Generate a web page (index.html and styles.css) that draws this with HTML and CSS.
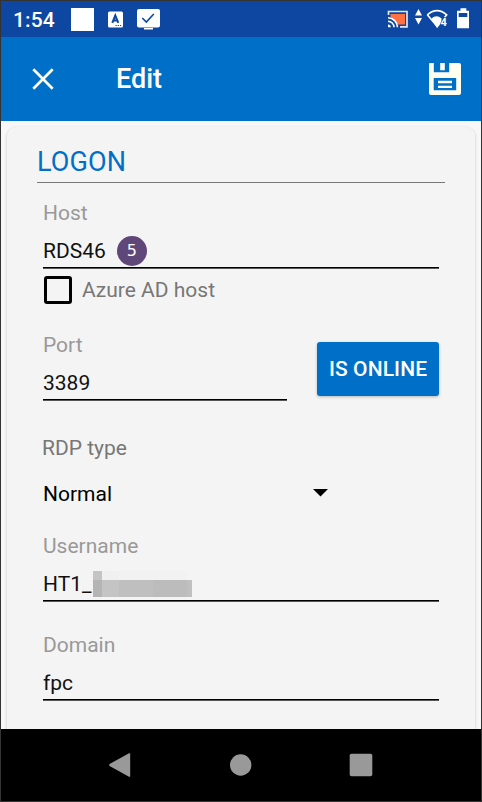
FILE: index.html
```html
<!DOCTYPE html>
<html lang="en">
<head>
<meta charset="utf-8">
<title>Edit</title>
<link rel="stylesheet" href="styles.css">
</head>
<body>
<div class="phone">
  <div class="status">
    <span class="clock">1:54</span>
    <svg class="notices" width="92" height="36" viewBox="70 1 92 36">
      <path fill="#fff" d="M71 8h23v23H71z"/>
      <rect x="108" y="11.500" width="15" height="16" rx="1.500" fill="#fff"/>
      <path d="M112.300 22.800 115.300 15.500 118.300 22.800M113.400 20.400H117.200" fill="none" stroke="#0d47a1" stroke-width="2"/>
      <path d="M115.500 25.500H122" stroke="#0d47a1" stroke-width="1.200" stroke-dasharray="1.200 1"/>
      <rect x="137" y="9" width="23" height="18.500" rx="2" fill="#fff"/>
      <path d="M144 28h9v1.500h-9z" fill="#fff"/>
      <path d="m142.300 18 4 4 7.500-8" fill="none" stroke="#0d47a1" stroke-width="1.600"/>
    </svg>
    <svg class="signals" width="86" height="36" viewBox="386 1 86 36">
      <path d="M390.500 14h14.500v10.500h-7.500l-1.500-3.500-5.500-4z" fill="#ff7043"/>
      <path d="M388.500 15v-3.500h18.500v15.300h-7" fill="none" stroke="#e3e6ef" stroke-width="1.700"/>
      <path d="M388 17.800a9.500 9.500 0 0 1 9.500 9.500M388 21.200a6 6 0 0 1 6 6" fill="none" stroke="#fff" stroke-width="1.600"/>
      <path d="M388 24.500a2.800 2.800 0 0 1 2.800 2.800H388zM415 15.500l3.500-6.500 3.500 6.500zM415 18l3.500 6.500 3.500-6.500z" fill="#fff"/>
      <path d="M427.300 14.800q9.700-8.200 19.400 0L444.500 17.500M427.300 14.800l9.500 11.200" fill="none" stroke="#fff" stroke-width="1.600"/>
      <path d="M431.500 18.500q5-4.500 10 0v4l-4.500 5.800z" fill="#fff"/>
      <text x="440.500" y="25.500" class="wifi-number">4</text>
      <path d="M460.500 8.300h5.800v2.500h2.700v17.500h-12V10.800h3.500z" fill="#fff"/>
      <path d="M458.700 13h8.600v4h-8.600z" fill="#0d47a1"/>
    </svg>
  </div>
  <header class="toolbar">
    <svg class="close" width="22" height="22" viewBox="0 0 22 22"><path d="m1.300 1.300 19.400 19.400M20.700 1.300 1.300 20.700" stroke="#fffff0" stroke-width="2.700"/></svg>
    <h1>Edit</h1>
    <svg class="save" width="32" height="32" viewBox="0 0 32 32">
      <path fill="#fffff0" fill-rule="evenodd" d="M1 0h3.800v9.200h15.400V0H30q2 0 2 2v28q0 2-2 2H2q-2 0-2-2V1q0-1 1-1zM4.700 15v12.300h22.500V15z"/>
      <path fill="#fffff0" d="M11.200 0h4.600v7.200h-4.600zM9 17.800h14v2.400H9zM9 22.700h14V25H9z"/>
    </svg>
  </header>
  <main class="content">
    <section class="card">
      <h2>LOGON</h2>
      <div class="form">
        <div class="field">
          <label>Host</label>
          <div class="value">RDS46<span class="step">5</span></div>
        </div>
        <div class="check"><span class="box"></span>Azure AD host</div>
        <div class="port-row">
          <div class="field port">
            <label>Port</label>
            <div class="value">3389</div>
          </div>
          <button class="online">IS ONLINE</button>
        </div>
        <div class="type-label">RDP type</div>
        <div class="select">Normal<svg class="caret" width="15" height="8" viewBox="0 0 15 8"><path d="M0 0h15L7.500 7.500z"/></svg></div>
        <div class="field user">
          <label>Username</label>
          <div class="value">HT1_<svg class="mask" width="99" height="26" viewBox="0 0 99 26" shape-rendering="crispEdges">
            <path fill="#c4c4c4" d="M0 0h9v9H0z"/><path fill="#f0f0f0" d="M9 0h17v9H9z"/><path fill="#f2f2f2" d="M26 0h68v9H26z"/>
            <path fill="#b4b4b4" d="M0 9h9v17H0z"/><path fill="#c4c4c4" d="M9 9h17v17H9z"/><path fill="#bfbfbf" d="M26 9h34v17H26z"/><path fill="#bcbcbc" d="M60 9h34v17H60z"/><path fill="#c0c0c0" d="M94 9h5v17h-5z"/>
          </svg></div>
        </div>
        <div class="field domain">
          <label>Domain</label>
          <div class="value">fpc</div>
        </div>
      </div>
    </section>
  </main>
  <nav class="navbar">
    <svg width="22" height="24" viewBox="0 0 22 24"><path d="M.6 11 20 .3q1.200-.5 1.200.7v22q0 1.200-1.200.7L.6 13q-1-1 0-2z" fill="#999"/></svg>
    <svg width="22" height="22" viewBox="0 0 22 22"><circle cx="11" cy="11" r="10.700" fill="#999"/></svg>
    <svg width="24" height="24" viewBox="0 0 24 24"><rect x=".7" y=".7" width="22.600" height="22.600" rx="1.800" fill="#999"/></svg>
  </nav>
</div>
</body>
</html>
```
FILE: styles.css
```css
* { box-sizing: border-box; }
body { margin: 0; font-family: Roboto, "Liberation Sans", sans-serif; font-size: 21px; line-height: 24px; color: #111; }
h1, h2 { margin: 0; }
svg { display: block; flex: none; }

.phone { display: flex; flex-direction: column; width: 482px; height: 802px; border: 1px solid #333; background: #f4f4f4; overflow: hidden; }

.status { display: flex; height: 36px; background: #0d47a1; color: #fff; }
.clock { width: 69px; padding: 7px 0 0 12px; font-weight: 500; letter-spacing: 0.1px; }
.signals { margin-left: auto; margin-right: 9px; }
.wifi-number { font: 700 11px Roboto, sans-serif; fill: #fff; stroke: #0d47a1; stroke-width: 1px; paint-order: stroke; }

.toolbar { display: flex; align-items: center; height: 84px; padding: 0 20px 0 31px; background: #006fc8; color: #fff; }
.toolbar h1 { margin-left: 62px; font-size: 27px; line-height: 32px; font-weight: 500; }
.save { margin-left: auto; }

.content { flex: 1; min-height: 0; padding: 6px 6px 0; overflow: hidden; background: #f7f7f7; }
.card { height: 640px; padding: 20px 30px 0; border-radius: 9px; background: #f4f4f4; box-shadow: 0 1px 3px rgba(0, 0, 0, 0.22); }
.card h2 { height: 36px; border-bottom: 1px solid #777; color: #006fc8; font-size: 27px; line-height: 30px; font-weight: 400; letter-spacing: 0.15px; }
.form { padding: 18px 6px 0; }

.field { height: 68px; border-bottom: 1px solid #555; box-shadow: inset 0 -1px #000; }
.field label { display: block; color: #999; }
.value { display: flex; align-items: center; height: 24px; margin-top: 14px; color: #111; }
.step { width: 30px; height: 30px; margin-left: 11px; border-radius: 50%; background: #5f4879; color: #fff; font: 16px/29px "DejaVu Sans", sans-serif; text-align: center; }
.mask { margin-left: 1px; }

.check { display: flex; align-items: center; gap: 10px; height: 24px; margin-top: 9px; padding-left: 1px; color: #777; }
.box { width: 28px; height: 28px; border: 3px solid #000; border-radius: 3px; }

.port-row { display: flex; justify-content: space-between; margin-top: 31px; }
.port { width: 244px; }
.online { width: 122px; height: 54px; margin-top: 9px; padding: 1px 0 0; border: 0; border-radius: 3px; background: #006fc8; color: #fff; font: 500 21px/53px Roboto, sans-serif; letter-spacing: 0.1px; box-shadow: 0 1px 3px rgba(0, 0, 0, 0.25); }

.type-label { margin: 35px 0 0 -1px; color: #777; }
.select { display: flex; align-items: center; justify-content: space-between; width: 285px; height: 24px; margin-top: 22px; color: #000; }
.caret { margin-top: -2px; }
.user { margin-top: 28px; }
.domain { margin-top: 31px; }

.navbar { display: flex; align-items: center; justify-content: space-between; height: 72px; padding: 0 108px; background: #000; }
.navbar circle { transform: translateX(0.7px); }
.navbar svg { overflow: visible; }
```
